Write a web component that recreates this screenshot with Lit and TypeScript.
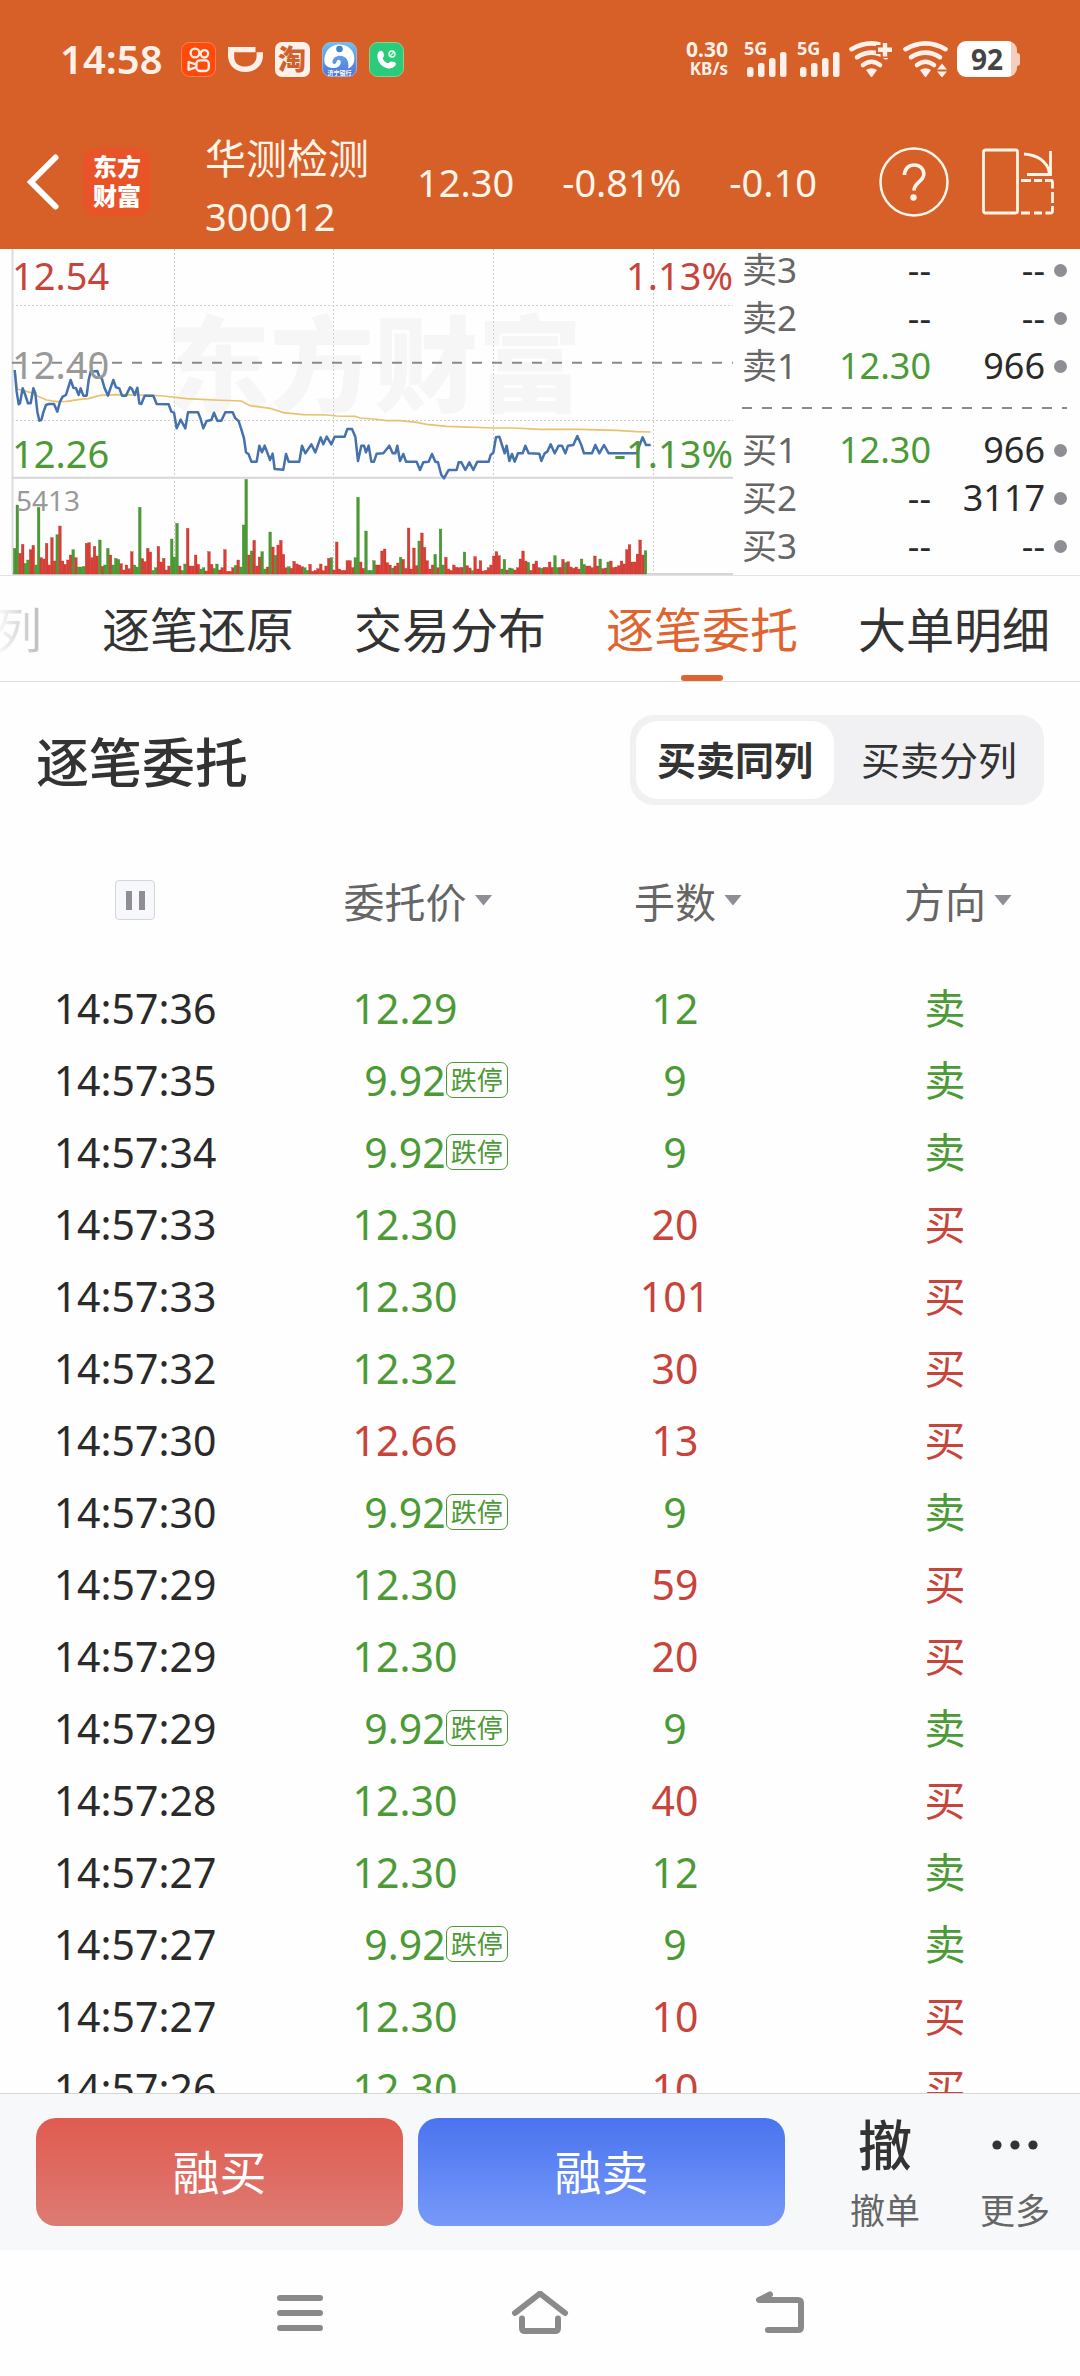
import { LitElement, html, svg, css } from "lit";
import { customElement, state } from "lit/decorators.js";
import { classMap } from "lit/directives/class-map.js";

type Order = { time: string; price: string; lots: string; side: "buy" | "sell"; up?: boolean; limit?: boolean };

const ORDERS: Order[] = [
  { time: "14:57:36", price: "12.29", lots: "12", side: "sell" },
  { time: "14:57:35", price: "9.92", lots: "9", side: "sell", limit: true },
  { time: "14:57:34", price: "9.92", lots: "9", side: "sell", limit: true },
  { time: "14:57:33", price: "12.30", lots: "20", side: "buy" },
  { time: "14:57:33", price: "12.30", lots: "101", side: "buy" },
  { time: "14:57:32", price: "12.32", lots: "30", side: "buy" },
  { time: "14:57:30", price: "12.66", lots: "13", side: "buy", up: true },
  { time: "14:57:30", price: "9.92", lots: "9", side: "sell", limit: true },
  { time: "14:57:29", price: "12.30", lots: "59", side: "buy" },
  { time: "14:57:29", price: "12.30", lots: "20", side: "buy" },
  { time: "14:57:29", price: "9.92", lots: "9", side: "sell", limit: true },
  { time: "14:57:28", price: "12.30", lots: "40", side: "buy" },
  { time: "14:57:27", price: "12.30", lots: "12", side: "sell" },
  { time: "14:57:27", price: "9.92", lots: "9", side: "sell", limit: true },
  { time: "14:57:27", price: "12.30", lots: "10", side: "buy" },
  { time: "14:57:26", price: "12.30", lots: "10", side: "buy" },
];

const BOOK = [
  [["卖3", "--", "--"], ["卖2", "--", "--"], ["卖1", "12.30", "966"]],
  [["买1", "12.30", "966"], ["买2", "--", "3117"], ["买3", "--", "--"]],
];

const TABS = ["列", "逐笔还原", "交易分布", "逐笔委托", "大单明细"];

/* One bar per minute: height in chart units, "g" marks a falling minute. */
const VOLUME = `77g 207g 62 89 32g 42g 73 86 27g 200g 49 45 92 27 109 39 118g 144 39 29 42 57 73g 49 21g 21g 23g 92 94 49
83 54 102g 23 27g 77g 57 27g 47g 44g 31 12 27 16 67 27g 21g 200g 46 37 77 66 11g 19g 83 36 47 12 24 105g
51g 152g 24 11g 30g 137 24 24 57 29 15g 19g 9 67 29 17g 30g 12 19 73 8 8 19 26g 42 21g 147g 284g 57 69g 101 24
51 67g 15g 21 126g 81 56g 87 101 59 19 22g 17 38 30 27 22 19g 11g 29 8 11 16 30 10 24 47 49g 12 96 15 11 11 40 40 19
49g 230g 36 17 129g 11g 11g 40g 27 27 69 75 34 27 18g 24 33 50g 44 17 138 15 78 25 99g 123 80 40 15 27 59g 19 135g
27g 50 15 11 27 20 19 20 66g 25 18 10g 52 15 40 9 11 19 27 54 67 55 15g 44g 12 18g 16g 12 19 45 69 39 35g 11 30 39
19 17g 20 20 36 20 55g 19g 20 44 34g 37 21 17 21 15 45g 29g 24 24 19 54 24 45g 16 18 36g 39 19 21 25 39 30 73 88 36
36 60 102 57 70g`
  .trim()
  .split(/\s+/)
  .map((v) => ({ h: parseInt(v, 10), down: v.endsWith("g") }));

const PRICE =
  "44,375 50,440 56,478 60,475 68,430 76,450 84,475 92,475 100,430 106,445 112,500 118,527 124,525 130,502 138,480 146,477 162,477 172,500 180,470 188,455 198,450 204,430 212,405 220,428 228,430 236,450 242,430 250,452 260,452 266,405 272,380 292,378 298,395 306,402 314,430 324,452 332,428 340,405 348,427 358,430 366,452 378,452 390,427 396,432 404,450 412,428 418,475 424,477 434,452 460,452 470,477 506,478 514,500 522,503 530,550 542,524 556,550 564,502 594,502 602,522 610,550 620,528 634,525 642,503 652,527 664,527 676,502 698,502 706,520 716,528 726,560 732,580 738,622 746,628 754,650 770,650 778,602 786,622 794,602 804,628 810,645 818,626 824,672 850,674 858,627 866,650 898,650 906,602 916,625 934,598 946,622 962,577 970,598 980,575 994,598 1004,575 1034,575 1042,552 1056,552 1066,575 1074,648 1084,602 1092,602 1098,622 1106,602 1114,650 1122,650 1130,626 1150,625 1168,602 1178,625 1186,625 1192,602 1200,648 1210,627 1218,650 1250,650 1260,675 1270,652 1286,650 1296,627 1306,650 1314,652 1324,690 1332,700 1340,685 1346,675 1370,675 1376,652 1384,652 1396,675 1408,652 1420,675 1432,650 1466,650 1472,630 1480,623 1488,577 1498,575 1506,600 1514,625 1520,602 1528,648 1536,627 1544,650 1554,625 1568,625 1576,602 1586,625 1618,626 1624,648 1634,625 1642,620 1652,598 1664,625 1676,602 1686,602 1696,625 1704,602 1720,600 1732,573 1744,600 1752,625 1776,625 1786,600 1798,625 1812,600 1826,625 1912,625 1918,602 1928,577 1938,600 1952,600";

const AVERAGE =
  "46,385 52,432 90,442 110,452 140,465 170,470 200,469 240,463 265,461 300,451 350,449 430,450 490,453 560,461 640,465 724,468 750,482 810,490 850,503 910,509 980,510 1010,513 1065,514 1080,519 1120,522 1160,527 1200,527 1250,532 1280,538 1340,544 1480,549 1540,549 1620,553 1740,553 1850,556 1910,560 1952,561";

const kuaishouIcon = svg`<svg class="app" viewBox="0 0 35 35" aria-hidden="true">
  <rect x=".5" y=".5" width="34" height="34" rx="8" fill="#ff4a0c" stroke="#ff8050"/>
  <g fill="none" stroke="#fff1ea" stroke-width="2.3">
    <circle cx="14" cy="11" r="4.4"/><circle cx="23.4" cy="11.8" r="3.7"/>
    <rect x="15.4" y="18.4" width="12.4" height="10.6" rx="3.4"/>
    <path d="M14.8 22.4 7.6 20v7.8l7.2-2.5" stroke-linejoin="round"/>
  </g></svg>`;

const didiIcon = svg`<svg class="app" viewBox="0 0 35 35" aria-hidden="true">
  <path fill="#fff1ea" d="M0 5h27.5v5.2H6.2v4.5c0 6 4 9.8 10.8 9.8S28.600 20.500 28.600 14v-3.800H35V13c0 10-7 17-17.600 17S0 23 0 13Z"/>
</svg>`;

const bankIcon = svg`<svg class="app" viewBox="0 0 35 35" aria-hidden="true">
  <defs><linearGradient id="bank" x1="0" y1="0" x2="0" y2="1"><stop offset="0" stop-color="#6cc0f2"/><stop offset="1" stop-color="#4f72d8"/></linearGradient></defs>
  <rect x=".5" y=".5" width="34" height="34" rx="8" fill="url(#bank)" stroke="#9ab4d8"/>
  <path fill="#fff" d="M3 22C.5 12 7 2.500 17.500 2.500S34 11 32 20c-1 3-3 5.500-6 6.500 1-4 .500-9-3.500-11.500-5-3-11.500-.500-12 4.500-.200 2 1.500 3 3 2 1.500-1.200 1-3.500 3-3.700 3 0 3 4.500.500 6.400C13 27 6 27 3 22Z"/>
  <circle cx="17.500" cy="7" r="3.300" fill="#3c86cf"/>
  <text x="17.500" y="32.500" font-size="6" font-weight="700" text-anchor="middle" fill="#fff">济宁银行</text>
</svg>`;

const callIcon = svg`<svg class="app" viewBox="0 0 35 35" aria-hidden="true">
  <rect x=".5" y=".5" width="34" height="34" rx="8" fill="#2bcb7c" stroke="#8fd08c"/>
  <path fill="#fff" d="M10 9.500c1.500-1.400 3.500-1 4.200.800l.900 2.700c.4 1.400-1.300 2-1.300 3.200 0 2 3.400 5 5.400 4.800 1.200-.100 1.700-1.800 3.200-1.600l3 .600c1.800.500 2 2.500.6 4-2.800 3-8.300 3.400-12.500.1C8.200 20 7 13 10 9.500Z"/>
  <circle cx="23" cy="12" r="3" fill="none" stroke="#e4fff0" stroke-width="1.300"/><path d="m21 14 4-4" stroke="#e4fff0" stroke-width="1.200"/>
</svg>`;

const signalIcon = svg`<svg class="signal" viewBox="0 0 43 36" aria-hidden="true">
  <text x="0" y="14" font-size="18" font-weight="700" fill="#fff1ea">5G</text>
  <g fill="#fff1ea"><rect x="3" y="26" width="6.500" height="10" rx="2.500"/><rect x="14" y="22" width="6.500" height="14" rx="2.500"/><rect x="25" y="17" width="6.500" height="19" rx="2.500"/><rect x="36" y="11" width="6.500" height="25" rx="2.500"/></g>
</svg>`;

const wifiArcs = svg`<g fill="none" stroke="#fff1ea" stroke-width="4.600" stroke-linecap="round">
    <path d="M2.500 8.200Q22.500-3.500 42.500 8.200"/><path d="M8 16.200q14.500-9 29 0"/><path d="M14 24q8.500-6.500 17 0"/></g>
    <path fill="#fff1ea" d="M17 29q5.500-3.500 11 0l-5 7h-1Z"/>`;

const wifiPlusIcon = svg`<svg class="wifi" viewBox="0 0 45 36" aria-hidden="true">${wifiArcs}
  <path d="M36 0v17M27 8.500h18" stroke="#d75f28" stroke-width="9"/>
  <path d="M36 2v13.500M29 8.800h14" stroke="#fff1ea" stroke-width="4.400"/></svg>`;

const wifiDataIcon = svg`<svg class="wifi" viewBox="0 0 45 36" aria-hidden="true">${wifiArcs}
  <path fill="#fff1ea" d="m39 22.500 5 6H34ZM39 36.500l5-6H34Z"/></svg>`;

@customElement("app-root")
export class AppRoot extends LitElement {
  @state() private tab = 3;
  @state() private split = false;
  @state() private paused = false;

  static styles = css`
    :host {
      display: flex;
      flex-direction: column;
      height: 100vh;
      overflow: hidden;
      background: #fefefe;
      color: #333;
      font-family: "Noto Sans", "Noto Sans CJK SC", sans-serif;
    }
    * { box-sizing: border-box; }
    button {
      margin: 0;
      padding: 0;
      border: 0;
      background: none;
      color: inherit;
      font: inherit;
      cursor: pointer;
    }
    svg { display: block; }

    .top { background: #d75f28; color: #fff5e8; }
    .status {
      display: flex;
      align-items: center;
      gap: 12px;
      height: 118px;
      padding: 0 60px;
      color: #fff1ea;
    }
    .clock { font-size: 40px; font-weight: 600; line-height: 48px; margin-right: 6px; }
    .app { width: 35px; height: 35px; }
    .tao {
      width: 35px;
      height: 35px;
      border-radius: 7px;
      background: #fff1ea;
      color: #d0602c;
      font-size: 28px;
      font-weight: 900;
      line-height: 35px;
      text-align: center;
    }
    .indicators { display: flex; align-items: center; gap: 9px; margin-left: auto; }
    .speed { font-weight: 700; text-align: right; font-size: 21px; line-height: 20px; }
    .speed span { display: block; }
    .speed .unit { font-size: 17px; }
    .signals { display: flex; gap: 10px; margin-left: 7px; }
    .signal { width: 43px; height: 36px; overflow: visible; }
    .wifi { width: 45px; height: 36px; }
    .battery { display: flex; align-items: center; }
    .level {
      width: 60px;
      height: 36px;
      border-radius: 9px;
      background: linear-gradient(90deg, #fff 90%, #f6cdbd 90%);
      color: #444;
      font-size: 28px;
      font-weight: 700;
      line-height: 36px;
      text-align: center;
    }
    .cap { width: 3px; height: 13px; border-radius: 0 3px 3px 0; background: #f6cdbd; }

    .title { display: flex; align-items: center; height: 131px; padding: 0 26px 3px; }
    .logo {
      width: 68px;
      height: 68px;
      margin: 0 54px 0 24px;
      border-radius: 14px;
      background: #e95328;
      color: #fff;
      font-size: 24px;
      font-weight: 900;
      line-height: 29px;
      padding: 4px 0;
      text-align: center;
    }
    .stock { font-weight: 400; margin: 10px 48px 0 0; font-size: 38px; line-height: 58px; }
    .stock h1 { margin: 0; font: inherit; font-size: 41px; line-height: 58px; }
    .quotes { display: flex; gap: 48px; font-size: 38px; line-height: 48px; white-space: nowrap; }
    .tools { display: flex; gap: 33px; margin-left: auto; }

    .market { display: grid; grid-template-columns: 733fr 347fr; border-bottom: 1px solid #e2e2e4; }
    .chart { position: relative; }
    .chart > svg { width: 100%; height: auto; }
    .label { position: absolute; font-size: 38px; line-height: 48px; }
    .high { top: 2px; }
    .mid { top: 91px; color: #999; }
    .low { top: 180px; }
    .left { left: 12px; }
    .right { right: 0; }
    .peak { top: 227px; left: 16px; color: #999; font-size: 28px; }
    .red { color: #c8443a; }
    .green { color: #4c9a35; }

    .book { display: flex; flex-direction: column; gap: 42px; padding: 0 13px 0 9px; font-size: 36px; line-height: 42px; }
    .side { display: grid; gap: 6px; }
    .level-row { display: grid; grid-template-columns: 60px 1fr 114px 22px; align-items: center; color: #2a2a2a; text-align: right; }
    .level-row .name { color: #666; text-align: left; white-space: nowrap; font-size: 35px; }
    .level-row .green { color: #4c9a35; }
    .level-row i { width: 13px; height: 13px; border-radius: 50%; background: #8f8e94; justify-self: end; }
    .split {
      height: 2px;
      margin: -22px 0;
      background: repeating-linear-gradient(90deg, #8a8a8a 0 10px, transparent 10px 20px);
    }

    .tabs { display: flex; gap: 60px; height: 106px; overflow: hidden; border-bottom: 1px solid #e0e0e2; }
    .tabs button {
      flex: none;
      display: flex;
      flex-direction: column;
      align-items: center;
      justify-content: space-between;
      font-size: 48px;
      line-height: 60px;
      padding-top: 24px;
      white-space: nowrap;
    }
    .tabs button:first-child {
      margin-left: -6px;
      background: linear-gradient(90deg, #fff, #bbb);
      background-clip: text;
      color: transparent;
    }
    .tabs button::after { content: ""; width: 42px; height: 6px; border-radius: 3px; }
    .tabs .active { color: #de6530; }
    .tabs .active::after { background: #de6530; }

    .heading { display: flex; align-items: center; justify-content: space-between; padding: 33px 36px 28px; }
    .heading h2 { margin: 0; padding-top: 5px; font-size: 53px; font-weight: 500; line-height: 72px; }
    .segment { display: flex; gap: 6px; padding: 6px; border-radius: 24px; background: #f1f1f3; }
    .segment button { width: 198px; height: 78px; border-radius: 22px; font-size: 39px; line-height: 54px; }
    .segment .on { background: #fff; font-weight: 700; }

    .list { flex: 1; min-height: 0; overflow: hidden; }
    table { width: 100%; border-collapse: collapse; table-layout: fixed; }
    th, td { padding: 0; font-weight: 400; text-align: center; }
    th { height: 140px; padding-bottom: 6px; font-size: 41px; color: #666; }
    td { height: 72px; padding-bottom: 2px; font-size: 41px; line-height: 60px; }
    .cell { display: grid; grid-template-columns: 1fr auto 1fr; align-items: center; width: 100%; }
    .cell > :first-child { grid-column: 2; }
    .arrow { width: 18px; height: 11px; margin-left: 8px; background: #8f8e94; clip-path: polygon(0 0, 100% 0, 50% 100%); }
    .pause {
      display: flex;
      justify-content: center;
      align-items: center;
      gap: 7px;
      width: 40px;
      height: 40px;
      margin: 0 auto;
      border: 1px solid #d4d6da;
      border-radius: 4px;
      background: #f7f8fb;
    }
    .pause i { width: 6px; height: 19px; background: #8f8e94; }
    .time { color: #2a2a2a; }
    .tag {
      justify-self: start;
      height: 36px;
      padding: 0 4px;
      border: 1px solid #4c9a35;
      border-radius: 7px;
      font-size: 26px;
      line-height: 34px;
    }

    .trade {
      display: flex;
      gap: 15px;
      padding: 24px 0 24px 36px;
      border-top: 1px solid #d4d6d9;
      background: #f7f8fa;
    }
    .deal { flex: 1; height: 108px; border-radius: 20px; color: #fff; font-size: 47px; line-height: 60px; }
    .buy { background: linear-gradient(#e05b50, #dd7b73); }
    .sell { background: linear-gradient(#4a74ef, #7799f9); }
    .more { display: grid; grid-template-columns: 130px 130px; margin-left: 20px; }
    .more button { display: flex; flex-direction: column; align-items: center; justify-content: space-between; color: #666; font-size: 35px; line-height: 30px; }
    .more .glyph { display: flex; align-items: center; height: 54px; color: #333; font-size: 54px; line-height: 54px; font-weight: 500; }

    .system { display: grid; grid-template-columns: repeat(3, 240px); justify-content: center; height: 126px; }
    .system button { display: grid; place-items: center; }
  `;

  private chart() {
    return html`<div class="chart">
      <svg viewBox="0 0 733 326" role="img" aria-label="分时走势">
        <text x="166" y="155" font-size="104" font-weight="900" fill="#f6f6f7">东方财富</text>
        <g fill="none" stroke="#cfcfd2" stroke-dasharray="2 2">
          <path d="M12 56.500H733M12 171.500H733M174.500 0V325M333.500 0V325M493.500 0V325M653.500 0V325"/>
        </g>
        <path d="M12.500 0V325" stroke="#dcdce0" stroke-width="2"/>
        <path d="M12 113.700H733" stroke="#8a8a8a" stroke-width="2" stroke-dasharray="10 10"/>
        <path d="M12 228.700H733M12 325H733" stroke="#d6d6d8" stroke-width="2"/>
        <g transform="translate(0 -4) scale(.33333)">
          ${VOLUME.map(
            (v, i) => svg`<rect x=${40 + i * 7.985} y=${987 - v.h} width="8" height=${v.h}
              fill=${v.down ? "#4c9a35" : "#d93d33"} stroke=${v.down ? "#418c2e" : "#b93a30"} stroke-width="1"/>`,
          )}
          <polyline points=${AVERAGE} fill="none" stroke="#e8c26e" stroke-width="5"/>
          <polyline points=${PRICE} fill="none" stroke="#4571ad" stroke-width="7.500" stroke-linejoin="round"/>
        </g>
      </svg>
      <span class="label high left red">12.54</span>
      <span class="label high right red">1.13%</span>
      <span class="label mid left">12.40</span>
      <span class="label low left green">12.26</span>
      <span class="label low right green">-1.13%</span>
      <span class="label peak">5413</span>
    </div>`;
  }

  private bookSide(rows: string[][]) {
    return html`<div class="side">
      ${rows.map(
        ([name, price, lots]) => html`<div class="level-row">
          <span class="name">${name}</span>
          <span class=${classMap({ green: price !== "--" })}>${price}</span>
          <span>${lots}</span><i></i>
        </div>`,
      )}
    </div>`;
  }

  private row(o: Order) {
    const tone = o.side === "buy" ? "red" : "green";
    return html`<tr>
      <td class="time">${o.time}</td>
      <td class=${o.up ? "red" : "green"}>
        <div class="cell"><span>${o.price}</span>${o.limit ? html`<span class="tag">跌停</span>` : null}</div>
      </td>
      <td class=${tone}>${o.lots}</td>
      <td class=${tone}>${o.side === "buy" ? "买" : "卖"}</td>
    </tr>`;
  }

  render() {
    return html`
      <header class="top">
        <div class="status">
          <span class="clock">14:58</span>
          ${kuaishouIcon}${didiIcon}<span class="tao">淘</span>${bankIcon}${callIcon}
          <div class="indicators">
            <div class="speed"><span>0.30</span><span class="unit">KB/s</span></div>
            <div class="signals">${signalIcon}${signalIcon}</div>
            ${wifiPlusIcon}${wifiDataIcon}
            <div class="battery"><span class="level">92</span><span class="cap"></span></div>
          </div>
        </div>
        <div class="title">
          <button aria-label="返回">
            <svg width="33" height="56" viewBox="0 0 33 56"><path d="M29.500 3.500 5 28l24.500 24.500" fill="none" stroke="#fff" stroke-width="6" stroke-linecap="round"/></svg>
          </button>
          <div class="logo">东方<br />财富</div>
          <div class="stock"><h1>华测检测</h1><div>300012</div></div>
          <div class="quotes"><span>12.30</span><span>-0.81%</span><span>-0.10</span></div>
          <div class="tools">
            <button aria-label="帮助">
              <svg width="70" height="70" viewBox="0 0 70 70" fill="none" stroke="#fff5e8">
                <circle cx="35" cy="35" r="33.500" stroke-width="2.500"/>
                <path d="M25.500 28c0-6 4-10 9.700-10s9.600 3.800 9.600 9c0 7.500-9.800 8.500-9.800 16.500" stroke-width="3.600"/>
                <circle cx="34.500" cy="50.500" r="3.200" fill="#fff5e8" stroke="none"/>
              </svg>
            </button>
            <button aria-label="横屏">
              <svg width="72" height="70" viewBox="0 0 72 70" fill="none" stroke="#fff5e8" stroke-width="2.800">
                <rect x="1.500" y="3" width="34" height="63" rx="2"/>
                <path d="M42 7c13 1 24 7 25.500 20M68.500 4v23.500H45"/>
                <path d="M39 33.500h10M52 33.500h8M63 33.500h6q1.500 0 1.500 2v6M70.500 45v11M70.500 59v5q0 2-2 2h-5M60 66h-8M48 66h-9"/>
              </svg>
            </button>
          </div>
        </div>
      </header>

      <section class="market">
        ${this.chart()}
        <div class="book">${this.bookSide(BOOK[0])}<div class="split"></div>${this.bookSide(BOOK[1])}</div>
      </section>

      <nav class="tabs" role="tablist">
        ${TABS.map(
          (t, i) => html`<button role="tab" aria-selected=${i === this.tab} class=${classMap({ active: i === this.tab })}
            @click=${() => (this.tab = i)}>${t}</button>`,
        )}
      </nav>

      <section class="heading">
        <h2>逐笔委托</h2>
        <div class="segment">
          <button class=${classMap({ on: !this.split })} aria-pressed=${!this.split} @click=${() => (this.split = false)}>买卖同列</button>
          <button class=${classMap({ on: this.split })} aria-pressed=${this.split} @click=${() => (this.split = true)}>买卖分列</button>
        </div>
      </section>

      <div class="list">
        <table>
          <thead>
            <tr>
              <th><button class="pause" aria-label="暂停" aria-pressed=${this.paused} @click=${() => (this.paused = !this.paused)}><i></i><i></i></button></th>
              ${["委托价", "手数", "方向"].map(
                (h) => html`<th><button class="cell"><span>${h}</span><span class="arrow"></span></button></th>`,
              )}
            </tr>
          </thead>
          <tbody>${ORDERS.map((o) => this.row(o))}</tbody>
        </table>
      </div>

      <footer>
        <div class="trade">
          <button class="deal buy">融买</button>
          <button class="deal sell">融卖</button>
          <div class="more">
            <button><span class="glyph">撤</span><span>撤单</span></button>
            <button>
              <span class="glyph"><svg width="46" height="10" viewBox="0 0 46 10" fill="#333"><circle cx="5" cy="5" r="4.600"/><circle cx="23" cy="5" r="4.600"/><circle cx="41" cy="5" r="4.600"/></svg></span>
              <span>更多</span>
            </button>
          </div>
        </div>
        <div class="system">
          <button aria-label="最近任务">
            <svg width="46" height="44" viewBox="0 0 46 44" stroke="#8a8a8a" stroke-width="6" stroke-linecap="round"><path d="M3 7h40M3 22h40M3 37h40"/></svg>
          </button>
          <button aria-label="主屏幕">
            <svg width="58" height="44" viewBox="0 0 58 44" fill="none" stroke="#8a8a8a" stroke-width="6" stroke-linecap="round" stroke-linejoin="round"><path d="m4 22 25-19.500L54 22M11 27.500V37q0 3 3 3h30q3 0 3-3v-9.500"/></svg>
          </button>
          <button aria-label="后退">
            <svg width="50" height="44" viewBox="0 0 50 44" fill="none" stroke="#8a8a8a" stroke-width="6" stroke-linecap="round" stroke-linejoin="round"><path d="M15 3.500 4 9h39q3 0 3 3v24q0 3-3 3H13"/></svg>
          </button>
        </div>
      </footer>
    `;
  }
}
